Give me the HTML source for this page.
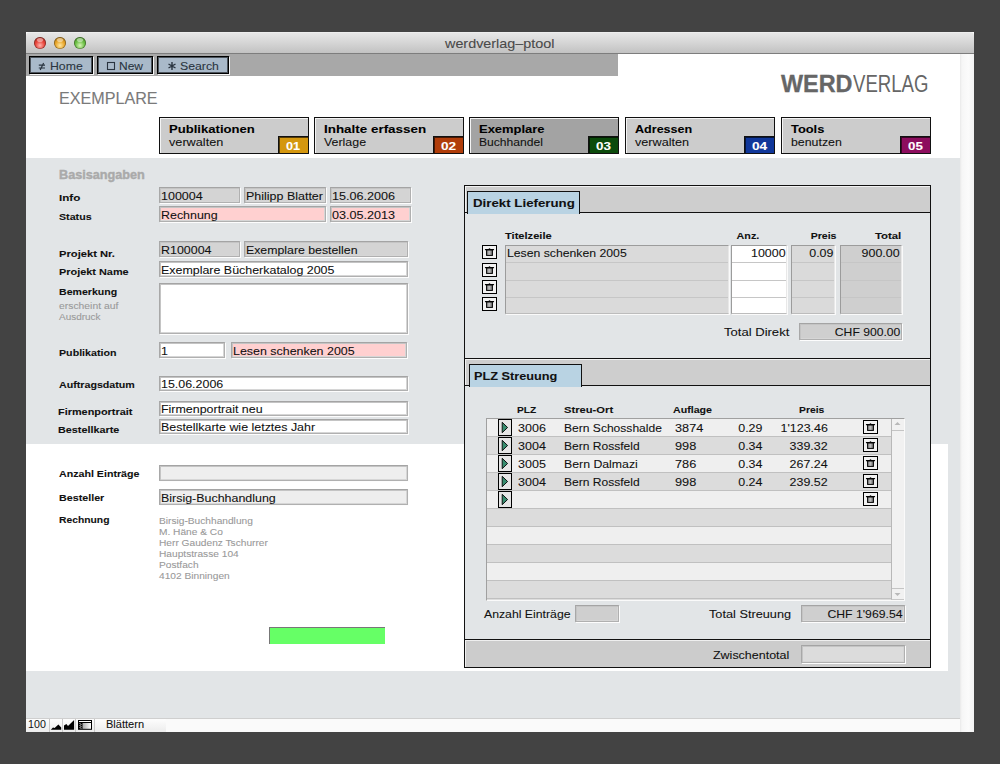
<!DOCTYPE html>
<html><head><meta charset="utf-8"><style>
html,body{margin:0;padding:0;}
body{width:1000px;height:764px;overflow:hidden;position:relative;background:#434343;font-family:"Liberation Sans",sans-serif;}
body>div,body>svg{position:absolute;}
.t{white-space:nowrap;line-height:1;-webkit-text-stroke:0.08px currentColor;}
</style></head><body>
<div style="left:26px;top:32px;width:948px;height:700px;background:#fafafa;"></div>
<div style="left:26px;top:32px;width:948px;height:21px;background:linear-gradient(#f4f4f4 0,#e6e6e6 1px,#d6d6d6 50%,#c2c2c2);border-radius:4px 4px 0 0;"></div>
<div style="left:26px;top:53px;width:948px;height:1px;background:#7d7d7d;"></div>
<div style="left:34px;top:37px;width:12px;height:12px;border-radius:50%;background:radial-gradient(circle at 50% 70%,#ffb3ad 0,#e8443a 45%,#8c2a22 100%);box-shadow:inset 0 0 0 0.8px rgba(0,0,0,0.35);"></div>
<div style="left:37px;top:38px;width:6px;height:3.5px;border-radius:50%;background:rgba(255,255,255,0.45);"></div>
<div style="left:54px;top:37px;width:12px;height:12px;border-radius:50%;background:radial-gradient(circle at 50% 70%,#ffe7a0 0,#e9a52a 45%,#8f6414 100%);box-shadow:inset 0 0 0 0.8px rgba(0,0,0,0.35);"></div>
<div style="left:57px;top:38px;width:6px;height:3.5px;border-radius:50%;background:rgba(255,255,255,0.45);"></div>
<div style="left:74px;top:37px;width:12px;height:12px;border-radius:50%;background:radial-gradient(circle at 50% 70%,#d8f5b8 0,#6cbf45 45%,#3f7a24 100%);box-shadow:inset 0 0 0 0.8px rgba(0,0,0,0.35);"></div>
<div style="left:77px;top:38px;width:6px;height:3.5px;border-radius:50%;background:rgba(255,255,255,0.45);"></div>
<div id="t0" class="t" style="left:444.85px;top:37.00px;font-size:13px;font-weight:normal;color:#4a4a4a;transform:scaleX(1.1052);transform-origin:left 0;font-family:'Liberation Sans', sans-serif;-webkit-text-stroke:0.1px #4a4a4a;">werdverlag–ptool</div>
<div style="left:26px;top:54px;width:934px;height:664px;background:#ffffff;"></div>
<div style="left:960px;top:54px;width:14px;height:678px;background:linear-gradient(90deg,#e9e9e9 0,#f6f6f6 2px,#fbfbfb 60%,#f3f3f3 100%);"></div>
<div style="left:26px;top:54px;width:592px;height:22px;background:#a8a8a8;"></div>
<div style="left:28.8px;top:56px;width:64.2px;height:18px;background:#a9b9c9;border:1px solid #000;box-sizing:border-box;box-shadow:inset 0 0 0 1px rgba(0,0,0,0.55),1px 1px 0 #f4f4f4;"></div>
<div id="t1" class="t" style="left:50.02px;top:61.00px;font-size:11px;font-weight:normal;color:#2a3440;transform:scaleX(1.1153);transform-origin:left 0;font-family:'Liberation Sans', sans-serif;">Home</div>
<div style="left:96.5px;top:56px;width:56.5px;height:18px;background:#a9b9c9;border:1px solid #000;box-sizing:border-box;box-shadow:inset 0 0 0 1px rgba(0,0,0,0.55),1px 1px 0 #f4f4f4;"></div>
<div id="t2" class="t" style="left:119.04px;top:61.00px;font-size:11px;font-weight:normal;color:#2a3440;transform:scaleX(1.0901);transform-origin:left 0;font-family:'Liberation Sans', sans-serif;">New</div>
<div style="left:156.5px;top:56px;width:72.5px;height:18px;background:#a9b9c9;border:1px solid #000;box-sizing:border-box;box-shadow:inset 0 0 0 1px rgba(0,0,0,0.55),1px 1px 0 #f4f4f4;"></div>
<div id="t3" class="t" style="left:179.52px;top:61.00px;font-size:11px;font-weight:normal;color:#2a3440;transform:scaleX(1.1167);transform-origin:left 0;font-family:'Liberation Sans', sans-serif;">Search</div>
<svg style="left:28px;top:56px;" width="200" height="18" viewBox="0 0 200 18"><path d="M10.8 9.2 H17 M10.8 12 H17 M15.6 7 L12.2 14" stroke="#2a3440" stroke-width="1.2" fill="none"/><rect x="79.5" y="6.5" width="7" height="7" fill="none" stroke="#2a3440" stroke-width="1.1"/><path d="M144 6 V14 M140.5 8 L147.5 12 M140.5 12 L147.5 8" stroke="#2a3440" stroke-width="1.4"/></svg>
<div id="t4" class="t" style="left:58.71px;top:91.00px;font-size:16px;font-weight:normal;color:#7a7a7a;transform:scaleX(1.0082);transform-origin:left 0;font-family:'Liberation Sans', sans-serif;-webkit-text-stroke:0.1px #7a7a7a;">EXEMPLARE</div>
<div id="t5" class="t" style="left:780.63px;top:73.00px;font-size:23px;font-weight:bold;color:#666;transform:scaleX(1.0179);transform-origin:left 0;font-family:'Liberation Sans', sans-serif;-webkit-text-stroke:0.3px #666;">WERD</div>
<div id="t6" class="t" style="left:852.91px;top:73.00px;font-size:23px;font-weight:normal;color:#666;transform:scaleX(0.8085);transform-origin:left 0;font-family:'Liberation Sans', sans-serif;-webkit-text-stroke:0px;">VERLAG</div>
<div style="left:159px;top:117px;width:150px;height:37px;background:#cccccc;border:1px solid #111;box-sizing:border-box;box-shadow:inset 1px 1px 0 #f4f4f4;"></div>
<div style="left:278px;top:135.5px;width:31px;height:18.5px;background:#d4970f;border:1px solid #111;box-sizing:border-box;box-shadow:inset 1px 1px 0 rgba(0,0,0,0.6);"></div>
<div id="t7" class="t" style="left:168.95px;top:124.00px;font-size:11px;font-weight:bold;color:#000;transform:scaleX(1.1897);transform-origin:left 0;font-family:'Liberation Sans', sans-serif;">Publikationen</div>
<div id="t8" class="t" style="left:168.99px;top:137.00px;font-size:11px;font-weight:normal;color:#111;transform:scaleX(1.1527);transform-origin:left 0;font-family:'Liberation Sans', sans-serif;">verwalten</div>
<div id="t9" class="t" style="left:285.98px;top:141.00px;font-size:10.5px;font-weight:bold;color:#fff;transform:scaleX(1.2127);transform-origin:left 0;font-family:'Liberation Sans', sans-serif;">01</div>
<div style="left:314px;top:117px;width:150px;height:37px;background:#cccccc;border:1px solid #111;box-sizing:border-box;box-shadow:inset 1px 1px 0 #f4f4f4;"></div>
<div style="left:433px;top:135.5px;width:31px;height:18.5px;background:#b03d0a;border:1px solid #111;box-sizing:border-box;box-shadow:inset 1px 1px 0 rgba(0,0,0,0.6);"></div>
<div id="t10" class="t" style="left:323.93px;top:124.00px;font-size:11px;font-weight:bold;color:#000;transform:scaleX(1.2194);transform-origin:left 0;font-family:'Liberation Sans', sans-serif;">Inhalte erfassen</div>
<div id="t11" class="t" style="left:324.01px;top:137.00px;font-size:11px;font-weight:normal;color:#111;transform:scaleX(1.1267);transform-origin:left 0;font-family:'Liberation Sans', sans-serif;">Verlage</div>
<div id="t12" class="t" style="left:440.91px;top:141.00px;font-size:10.5px;font-weight:bold;color:#fff;transform:scaleX(1.2973);transform-origin:left 0;font-family:'Liberation Sans', sans-serif;">02</div>
<div style="left:469px;top:117px;width:150px;height:37px;background:#a3a3a3;border:1px solid #111;box-sizing:border-box;box-shadow:inset 1px 1px 0 #f4f4f4;"></div>
<div style="left:588px;top:135.5px;width:31px;height:18.5px;background:#0b4a0b;border:1px solid #111;box-sizing:border-box;box-shadow:inset 1px 1px 0 rgba(0,0,0,0.6);"></div>
<div id="t13" class="t" style="left:478.96px;top:124.00px;font-size:11px;font-weight:bold;color:#000;transform:scaleX(1.1786);transform-origin:left 0;font-family:'Liberation Sans', sans-serif;">Exemplare</div>
<div id="t14" class="t" style="left:479.03px;top:137.00px;font-size:11px;font-weight:normal;color:#111;transform:scaleX(1.0998);transform-origin:left 0;font-family:'Liberation Sans', sans-serif;">Buchhandel</div>
<div id="t15" class="t" style="left:595.93px;top:141.00px;font-size:10.5px;font-weight:bold;color:#fff;transform:scaleX(1.2785);transform-origin:left 0;font-family:'Liberation Sans', sans-serif;">03</div>
<div style="left:625px;top:117px;width:150px;height:37px;background:#cccccc;border:1px solid #111;box-sizing:border-box;box-shadow:inset 1px 1px 0 #f4f4f4;"></div>
<div style="left:744px;top:135.5px;width:31px;height:18.5px;background:#10379a;border:1px solid #111;box-sizing:border-box;box-shadow:inset 1px 1px 0 rgba(0,0,0,0.6);"></div>
<div id="t16" class="t" style="left:635.00px;top:124.00px;font-size:11px;font-weight:bold;color:#000;transform:scaleX(1.1419);transform-origin:left 0;font-family:'Liberation Sans', sans-serif;">Adressen</div>
<div id="t17" class="t" style="left:634.99px;top:137.00px;font-size:11px;font-weight:normal;color:#111;transform:scaleX(1.1484);transform-origin:left 0;font-family:'Liberation Sans', sans-serif;">verwalten</div>
<div id="t18" class="t" style="left:751.91px;top:141.00px;font-size:10.5px;font-weight:bold;color:#fff;transform:scaleX(1.2973);transform-origin:left 0;font-family:'Liberation Sans', sans-serif;">04</div>
<div style="left:781px;top:117px;width:150px;height:37px;background:#cccccc;border:1px solid #111;box-sizing:border-box;box-shadow:inset 1px 1px 0 #f4f4f4;"></div>
<div style="left:900px;top:135.5px;width:31px;height:18.5px;background:#8c0d5e;border:1px solid #111;box-sizing:border-box;box-shadow:inset 1px 1px 0 rgba(0,0,0,0.6);"></div>
<div id="t19" class="t" style="left:790.97px;top:124.00px;font-size:11px;font-weight:bold;color:#000;transform:scaleX(1.1672);transform-origin:left 0;font-family:'Liberation Sans', sans-serif;">Tools</div>
<div id="t20" class="t" style="left:791.01px;top:137.00px;font-size:11px;font-weight:normal;color:#111;transform:scaleX(1.1230);transform-origin:left 0;font-family:'Liberation Sans', sans-serif;">benutzen</div>
<div id="t21" class="t" style="left:907.93px;top:141.00px;font-size:10.5px;font-weight:bold;color:#fff;transform:scaleX(1.2691);transform-origin:left 0;font-family:'Liberation Sans', sans-serif;">05</div>
<div style="left:26px;top:158px;width:934px;height:286px;background:#e2e5e7;"></div>
<div style="left:948px;top:444px;width:12px;height:227px;background:#e2e5e7;"></div>
<div style="left:26px;top:671px;width:934px;height:47px;background:#e2e5e7;"></div>
<div id="t22" class="t" style="left:59.19px;top:169.00px;font-size:12px;font-weight:bold;color:#aaaaaa;transform:scaleX(1.0552);transform-origin:left 0;font-family:'Liberation Sans', sans-serif;-webkit-text-stroke:0.4px #aaa;">Basisangaben</div>
<div id="t23" class="t" style="left:58.97px;top:193.00px;font-size:9.6px;font-weight:bold;color:#111;transform:scaleX(1.2144);transform-origin:left 0;font-family:'Liberation Sans', sans-serif;">Info</div>
<div id="t24" class="t" style="left:58.85px;top:212.00px;font-size:9.6px;font-weight:bold;color:#111;transform:scaleX(1.1104);transform-origin:left 0;font-family:'Liberation Sans', sans-serif;">Status</div>
<div id="t25" class="t" style="left:58.51px;top:249.00px;font-size:9.6px;font-weight:bold;color:#111;transform:scaleX(1.1650);transform-origin:left 0;font-family:'Liberation Sans', sans-serif;">Projekt Nr.</div>
<div id="t26" class="t" style="left:58.53px;top:267.00px;font-size:9.6px;font-weight:bold;color:#111;transform:scaleX(1.1364);transform-origin:left 0;font-family:'Liberation Sans', sans-serif;">Projekt Name</div>
<div id="t27" class="t" style="left:58.55px;top:287.00px;font-size:9.6px;font-weight:bold;color:#111;transform:scaleX(1.1019);transform-origin:left 0;font-family:'Liberation Sans', sans-serif;">Bemerkung</div>
<div id="t28" class="t" style="left:58.55px;top:348.00px;font-size:9.6px;font-weight:bold;color:#111;transform:scaleX(1.1115);transform-origin:left 0;font-family:'Liberation Sans', sans-serif;">Publikation</div>
<div id="t29" class="t" style="left:58.55px;top:380.00px;font-size:9.6px;font-weight:bold;color:#111;transform:scaleX(1.1119);transform-origin:left 0;font-family:'Liberation Sans', sans-serif;">Auftragsdatum</div>
<div id="t30" class="t" style="left:57.63px;top:407.00px;font-size:9.6px;font-weight:bold;color:#111;transform:scaleX(1.1344);transform-origin:left 0;font-family:'Liberation Sans', sans-serif;">Firmenportrait</div>
<div id="t31" class="t" style="left:57.63px;top:425.00px;font-size:9.6px;font-weight:bold;color:#111;transform:scaleX(1.1264);transform-origin:left 0;font-family:'Liberation Sans', sans-serif;">Bestellkarte</div>
<div id="t32" class="t" style="left:58.55px;top:469.00px;font-size:9.6px;font-weight:bold;color:#111;transform:scaleX(1.1099);transform-origin:left 0;font-family:'Liberation Sans', sans-serif;">Anzahl Einträge</div>
<div id="t33" class="t" style="left:58.54px;top:493.00px;font-size:9.6px;font-weight:bold;color:#111;transform:scaleX(1.1170);transform-origin:left 0;font-family:'Liberation Sans', sans-serif;">Besteller</div>
<div id="t34" class="t" style="left:58.57px;top:515.00px;font-size:9.6px;font-weight:bold;color:#111;transform:scaleX(1.0752);transform-origin:left 0;font-family:'Liberation Sans', sans-serif;">Rechnung</div>
<div id="t35" class="t" style="left:58.57px;top:302.00px;font-size:9px;font-weight:normal;color:#999;transform:scaleX(1.1515);transform-origin:left 0;font-family:'Liberation Sans', sans-serif;">erscheint auf</div>
<div id="t36" class="t" style="left:58.60px;top:313.00px;font-size:9px;font-weight:normal;color:#999;transform:scaleX(1.1083);transform-origin:left 0;font-family:'Liberation Sans', sans-serif;">Ausdruck</div>
<div style="left:159px;top:187px;width:81px;height:16px;background:#d4d4d4;border:1px solid #b0b0b0;border-top-color:#a4a4a4;border-left-color:#a8a8a8;box-sizing:border-box;box-shadow:1px 1px 0 #fdfdfd,inset 1px 1px 0 #c4c4c4,inset -1px -1px 0 #d6d6d6;"></div>
<div id="t37" class="t" style="left:161.10px;top:191.00px;font-size:11px;font-weight:normal;color:#111;transform:scaleX(1.1370);transform-origin:left 0;font-family:'Liberation Sans', sans-serif;">100004</div>
<div style="left:244px;top:187px;width:82px;height:16px;background:#d4d4d4;border:1px solid #b0b0b0;border-top-color:#a4a4a4;border-left-color:#a8a8a8;box-sizing:border-box;box-shadow:1px 1px 0 #fdfdfd,inset 1px 1px 0 #c4c4c4,inset -1px -1px 0 #d6d6d6;"></div>
<div id="t38" class="t" style="left:246.10px;top:191.00px;font-size:11px;font-weight:normal;color:#111;transform:scaleX(1.1337);transform-origin:left 0;font-family:'Liberation Sans', sans-serif;">Philipp Blatter</div>
<div style="left:330px;top:187px;width:81px;height:16px;background:#d4d4d4;border:1px solid #b0b0b0;border-top-color:#a4a4a4;border-left-color:#a8a8a8;box-sizing:border-box;box-shadow:1px 1px 0 #fdfdfd,inset 1px 1px 0 #c4c4c4,inset -1px -1px 0 #d6d6d6;"></div>
<div id="t39" class="t" style="left:332.09px;top:191.00px;font-size:11px;font-weight:normal;color:#111;transform:scaleX(1.1452);transform-origin:left 0;font-family:'Liberation Sans', sans-serif;">15.06.2006</div>
<div style="left:159px;top:206px;width:167px;height:16px;background:#ffd0d0;border:1px solid #b0b0b0;border-top-color:#a4a4a4;border-left-color:#a8a8a8;box-sizing:border-box;box-shadow:1px 1px 0 #fdfdfd,inset 1px 1px 0 #c4c4c4,inset -1px -1px 0 #d6d6d6;"></div>
<div id="t40" class="t" style="left:161.11px;top:210.00px;font-size:11px;font-weight:normal;color:#111;transform:scaleX(1.1300);transform-origin:left 0;font-family:'Liberation Sans', sans-serif;">Rechnung</div>
<div style="left:330px;top:206px;width:81px;height:16px;background:#ffd0d0;border:1px solid #b0b0b0;border-top-color:#a4a4a4;border-left-color:#a8a8a8;box-sizing:border-box;box-shadow:1px 1px 0 #fdfdfd,inset 1px 1px 0 #c4c4c4,inset -1px -1px 0 #d6d6d6;"></div>
<div id="t41" class="t" style="left:332.09px;top:210.00px;font-size:11px;font-weight:normal;color:#111;transform:scaleX(1.1452);transform-origin:left 0;font-family:'Liberation Sans', sans-serif;">03.05.2013</div>
<div style="left:159px;top:241px;width:81px;height:16px;background:#d4d4d4;border:1px solid #b0b0b0;border-top-color:#a4a4a4;border-left-color:#a8a8a8;box-sizing:border-box;box-shadow:1px 1px 0 #fdfdfd,inset 1px 1px 0 #c4c4c4,inset -1px -1px 0 #d6d6d6;"></div>
<div id="t42" class="t" style="left:161.11px;top:245.00px;font-size:11px;font-weight:normal;color:#111;transform:scaleX(1.1300);transform-origin:left 0;font-family:'Liberation Sans', sans-serif;">R100004</div>
<div style="left:244px;top:241px;width:164px;height:16px;background:#d4d4d4;border:1px solid #b0b0b0;border-top-color:#a4a4a4;border-left-color:#a8a8a8;box-sizing:border-box;box-shadow:1px 1px 0 #fdfdfd,inset 1px 1px 0 #c4c4c4,inset -1px -1px 0 #d6d6d6;"></div>
<div id="t43" class="t" style="left:246.12px;top:245.00px;font-size:11px;font-weight:normal;color:#111;transform:scaleX(1.1190);transform-origin:left 0;font-family:'Liberation Sans', sans-serif;">Exemplare bestellen</div>
<div style="left:159px;top:261px;width:249px;height:16px;background:#ffffff;border:1px solid #b0b0b0;border-top-color:#a4a4a4;border-left-color:#a8a8a8;box-sizing:border-box;box-shadow:1px 1px 0 #fdfdfd,inset 1px 1px 0 #c4c4c4,inset -1px -1px 0 #d6d6d6;"></div>
<div id="t44" class="t" style="left:161.11px;top:265.00px;font-size:11px;font-weight:normal;color:#111;transform:scaleX(1.1300);transform-origin:left 0;font-family:'Liberation Sans', sans-serif;">Exemplare Bücherkatalog 2005</div>
<div style="left:159px;top:282.5px;width:249px;height:51.0px;background:#ffffff;border:1px solid #b0b0b0;border-top-color:#a4a4a4;border-left-color:#a8a8a8;box-sizing:border-box;box-shadow:1px 1px 0 #fdfdfd,inset 1px 1px 0 #c4c4c4,inset -1px -1px 0 #d6d6d6;"></div>
<div style="left:159px;top:342px;width:66px;height:16px;background:#ffffff;border:1px solid #b0b0b0;border-top-color:#a4a4a4;border-left-color:#a8a8a8;box-sizing:border-box;box-shadow:1px 1px 0 #fdfdfd,inset 1px 1px 0 #c4c4c4,inset -1px -1px 0 #d6d6d6;"></div>
<div id="t45" class="t" style="left:161.11px;top:346.00px;font-size:11px;font-weight:normal;color:#111;transform:scaleX(1.1300);transform-origin:left 0;font-family:'Liberation Sans', sans-serif;">1</div>
<div style="left:231px;top:342px;width:176px;height:16px;background:#ffd0d0;border:1px solid #b0b0b0;border-top-color:#a4a4a4;border-left-color:#a8a8a8;box-sizing:border-box;box-shadow:1px 1px 0 #fdfdfd,inset 1px 1px 0 #c4c4c4,inset -1px -1px 0 #d6d6d6;"></div>
<div id="t46" class="t" style="left:233.11px;top:346.00px;font-size:11px;font-weight:normal;color:#111;transform:scaleX(1.1300);transform-origin:left 0;font-family:'Liberation Sans', sans-serif;">Lesen schenken 2005</div>
<div style="left:159px;top:375.5px;width:249px;height:15.5px;background:#ffffff;border:1px solid #b0b0b0;border-top-color:#a4a4a4;border-left-color:#a8a8a8;box-sizing:border-box;box-shadow:1px 1px 0 #fdfdfd,inset 1px 1px 0 #c4c4c4,inset -1px -1px 0 #d6d6d6;"></div>
<div id="t47" class="t" style="left:161.11px;top:379.00px;font-size:11px;font-weight:normal;color:#111;transform:scaleX(1.1300);transform-origin:left 0;font-family:'Liberation Sans', sans-serif;">15.06.2006</div>
<div style="left:159px;top:400.5px;width:249px;height:15.0px;background:#ffffff;border:1px solid #b0b0b0;border-top-color:#a4a4a4;border-left-color:#a8a8a8;box-sizing:border-box;box-shadow:1px 1px 0 #fdfdfd,inset 1px 1px 0 #c4c4c4,inset -1px -1px 0 #d6d6d6;"></div>
<div id="t48" class="t" style="left:161.11px;top:404.00px;font-size:11px;font-weight:normal;color:#111;transform:scaleX(1.1300);transform-origin:left 0;font-family:'Liberation Sans', sans-serif;">Firmenportrait neu</div>
<div style="left:159px;top:419px;width:249px;height:15px;background:#ffffff;border:1px solid #b0b0b0;border-top-color:#a4a4a4;border-left-color:#a8a8a8;box-sizing:border-box;box-shadow:1px 1px 0 #fdfdfd,inset 1px 1px 0 #c4c4c4,inset -1px -1px 0 #d6d6d6;"></div>
<div id="t49" class="t" style="left:161.11px;top:422.00px;font-size:11px;font-weight:normal;color:#111;transform:scaleX(1.1300);transform-origin:left 0;font-family:'Liberation Sans', sans-serif;">Bestellkarte wie letztes Jahr</div>
<div style="left:159px;top:465px;width:249px;height:16px;background:#eeeeee;border:1px solid #b0b0b0;border-top-color:#a4a4a4;border-left-color:#a8a8a8;box-sizing:border-box;box-shadow:1px 1px 0 #fdfdfd,inset 1px 1px 0 #c4c4c4,inset -1px -1px 0 #d6d6d6;"></div>
<div style="left:159px;top:489px;width:249px;height:16px;background:#eeeeee;border:1px solid #b0b0b0;border-top-color:#a4a4a4;border-left-color:#a8a8a8;box-sizing:border-box;box-shadow:1px 1px 0 #fdfdfd,inset 1px 1px 0 #c4c4c4,inset -1px -1px 0 #d6d6d6;"></div>
<div id="t50" class="t" style="left:161.11px;top:493.00px;font-size:11px;font-weight:normal;color:#111;transform:scaleX(1.1300);transform-origin:left 0;font-family:'Liberation Sans', sans-serif;">Birsig-Buchhandlung</div>
<div id="t51" class="t" style="left:159.19px;top:517.00px;font-size:9px;font-weight:normal;color:#999;transform:scaleX(1.1300);transform-origin:left 0;font-family:'Liberation Sans', sans-serif;">Birsig-Buchhandlung</div>
<div id="t52" class="t" style="left:159.19px;top:528.00px;font-size:9px;font-weight:normal;color:#999;transform:scaleX(1.1300);transform-origin:left 0;font-family:'Liberation Sans', sans-serif;">M. Häne &amp; Co</div>
<div id="t53" class="t" style="left:159.19px;top:539.00px;font-size:9px;font-weight:normal;color:#999;transform:scaleX(1.1300);transform-origin:left 0;font-family:'Liberation Sans', sans-serif;">Herr Gaudenz Tschurrer</div>
<div id="t54" class="t" style="left:159.19px;top:550.00px;font-size:9px;font-weight:normal;color:#999;transform:scaleX(1.1300);transform-origin:left 0;font-family:'Liberation Sans', sans-serif;">Hauptstrasse 104</div>
<div id="t55" class="t" style="left:159.19px;top:561.00px;font-size:9px;font-weight:normal;color:#999;transform:scaleX(1.1300);transform-origin:left 0;font-family:'Liberation Sans', sans-serif;">Postfach</div>
<div id="t56" class="t" style="left:159.19px;top:572.00px;font-size:9px;font-weight:normal;color:#999;transform:scaleX(1.1300);transform-origin:left 0;font-family:'Liberation Sans', sans-serif;">4102 Binningen</div>
<div style="left:269px;top:627px;width:116px;height:17px;background:#66ff66;border-top:1px solid #777;border-left:1px solid #777;box-sizing:border-box;"></div>
<div style="left:464px;top:185px;width:467px;height:174px;background:#e2e5e7;border:1px solid #111;border-bottom:none;box-sizing:border-box;"></div>
<div style="left:465px;top:186px;width:465px;height:26px;background:#cecece;box-shadow:inset 1px 1px 0 #f2f2f2;"></div>
<div style="left:464px;top:212px;width:467px;height:1px;background:#111;"></div>
<div style="left:467px;top:191px;width:113px;height:22.5px;background:#b9d3e3;border:1px solid #111;border-bottom:none;box-sizing:border-box;"></div>
<div id="t57" class="t" style="left:472.84px;top:198.00px;font-size:11px;font-weight:bold;color:#111;transform:scaleX(1.2071);transform-origin:left 0;font-family:'Liberation Sans', sans-serif;">Direkt Lieferung</div>
<div id="t58" class="t" style="left:504.61px;top:231.00px;font-size:9.6px;font-weight:bold;color:#111;transform:scaleX(1.1574);transform-origin:left 0;font-family:'Liberation Sans', sans-serif;">Titelzeile</div>
<div id="t59" class="t" style="right:240.66px;top:231.00px;font-size:9.6px;font-weight:bold;color:#111;transform:scaleX(1.1188);transform-origin:right 0;font-family:'Liberation Sans', sans-serif;">Anz.</div>
<div id="t60" class="t" style="right:163.27px;top:231.00px;font-size:9.6px;font-weight:bold;color:#111;transform:scaleX(1.1010);transform-origin:right 0;font-family:'Liberation Sans', sans-serif;">Preis</div>
<div id="t61" class="t" style="right:98.93px;top:231.00px;font-size:9.6px;font-weight:bold;color:#111;transform:scaleX(1.1854);transform-origin:right 0;font-family:'Liberation Sans', sans-serif;">Total</div>
<div style="left:505px;top:244.5px;width:223.5px;height:69.5px;background:#dadada;border:1px solid #bcbcbc;border-top-color:#9c9c9c;border-left-color:#9c9c9c;border-right-color:#e8e8e8;box-sizing:border-box;box-shadow:1px 1px 0 #fafafa;"></div>
<div style="left:506px;top:262.3px;width:221.5px;height:1.0px;background:#c6c6c6;"></div>
<div style="left:506px;top:279.5px;width:221.5px;height:1.0px;background:#c6c6c6;"></div>
<div style="left:506px;top:296.7px;width:221.5px;height:1.0px;background:#c6c6c6;"></div>
<div style="left:730.5px;top:244.5px;width:56.5px;height:69.5px;background:#ffffff;border:1px solid #bcbcbc;border-top-color:#9c9c9c;border-left-color:#9c9c9c;border-right-color:#e8e8e8;box-sizing:border-box;box-shadow:1px 1px 0 #fafafa;"></div>
<div style="left:731.5px;top:262.3px;width:54.5px;height:1.0px;background:#c6c6c6;"></div>
<div style="left:731.5px;top:279.5px;width:54.5px;height:1.0px;background:#c6c6c6;"></div>
<div style="left:731.5px;top:296.7px;width:54.5px;height:1.0px;background:#c6c6c6;"></div>
<div style="left:790.5px;top:244.5px;width:44.0px;height:69.5px;background:#dadada;border:1px solid #bcbcbc;border-top-color:#9c9c9c;border-left-color:#9c9c9c;border-right-color:#e8e8e8;box-sizing:border-box;box-shadow:1px 1px 0 #fafafa;"></div>
<div style="left:791.5px;top:262.3px;width:42.0px;height:1.0px;background:#c6c6c6;"></div>
<div style="left:791.5px;top:279.5px;width:42.0px;height:1.0px;background:#c6c6c6;"></div>
<div style="left:791.5px;top:296.7px;width:42.0px;height:1.0px;background:#c6c6c6;"></div>
<div style="left:839.5px;top:244.5px;width:62.0px;height:69.5px;background:#cfcfcf;border:1px solid #bcbcbc;border-top-color:#9c9c9c;border-left-color:#9c9c9c;border-right-color:#e8e8e8;box-sizing:border-box;box-shadow:1px 1px 0 #fafafa;"></div>
<div style="left:840.5px;top:262.3px;width:60.0px;height:1.0px;background:#c6c6c6;"></div>
<div style="left:840.5px;top:279.5px;width:60.0px;height:1.0px;background:#c6c6c6;"></div>
<div style="left:840.5px;top:296.7px;width:60.0px;height:1.0px;background:#c6c6c6;"></div>
<div id="t62" class="t" style="left:507.02px;top:248.00px;font-size:11px;font-weight:normal;color:#111;transform:scaleX(1.1121);transform-origin:left 0;font-family:'Liberation Sans', sans-serif;">Lesen schenken 2005</div>
<div id="t63" class="t" style="right:214.08px;top:248.00px;font-size:11px;font-weight:normal;color:#111;transform:scaleX(1.1300);transform-origin:right 0;font-family:'Liberation Sans', sans-serif;">10000</div>
<div id="t64" class="t" style="right:166.88px;top:248.00px;font-size:11px;font-weight:normal;color:#111;transform:scaleX(1.1300);transform-origin:right 0;font-family:'Liberation Sans', sans-serif;">0.09</div>
<div id="t65" class="t" style="right:99.88px;top:248.00px;font-size:11px;font-weight:normal;color:#111;transform:scaleX(1.1300);transform-origin:right 0;font-family:'Liberation Sans', sans-serif;">900.00</div>
<div style="left:482px;top:245px;width:15px;height:14px;border:1px solid #000;box-sizing:border-box;background:#f2f2f2;"></div>
<svg style="left:482px;top:245px;" width="15" height="14" viewBox="0 0 15 14"><defs><linearGradient id="tg" x1="0" x2="1"><stop offset="0" stop-color="#777"/><stop offset="0.45" stop-color="#c4c4c4"/><stop offset="1" stop-color="#666"/></linearGradient></defs><path d="M3.4 4.6 H11.6" stroke="#000" stroke-width="1.1" stroke-linecap="round"/><path d="M6.4 4.3 Q7.5 2.4 8.6 4.3Z" fill="#000"/><rect x="4.6" y="5" width="5.8" height="5.4" fill="url(#tg)" stroke="#000" stroke-width="1"/></svg>
<div style="left:482px;top:262.5px;width:15px;height:14px;border:1px solid #000;box-sizing:border-box;background:#f2f2f2;"></div>
<svg style="left:482px;top:262.5px;" width="15" height="14" viewBox="0 0 15 14"><defs><linearGradient id="tg" x1="0" x2="1"><stop offset="0" stop-color="#777"/><stop offset="0.45" stop-color="#c4c4c4"/><stop offset="1" stop-color="#666"/></linearGradient></defs><path d="M3.4 4.6 H11.6" stroke="#000" stroke-width="1.1" stroke-linecap="round"/><path d="M6.4 4.3 Q7.5 2.4 8.6 4.3Z" fill="#000"/><rect x="4.6" y="5" width="5.8" height="5.4" fill="url(#tg)" stroke="#000" stroke-width="1"/></svg>
<div style="left:482px;top:280px;width:15px;height:14px;border:1px solid #000;box-sizing:border-box;background:#f2f2f2;"></div>
<svg style="left:482px;top:280px;" width="15" height="14" viewBox="0 0 15 14"><defs><linearGradient id="tg" x1="0" x2="1"><stop offset="0" stop-color="#777"/><stop offset="0.45" stop-color="#c4c4c4"/><stop offset="1" stop-color="#666"/></linearGradient></defs><path d="M3.4 4.6 H11.6" stroke="#000" stroke-width="1.1" stroke-linecap="round"/><path d="M6.4 4.3 Q7.5 2.4 8.6 4.3Z" fill="#000"/><rect x="4.6" y="5" width="5.8" height="5.4" fill="url(#tg)" stroke="#000" stroke-width="1"/></svg>
<div style="left:482px;top:297px;width:15px;height:14px;border:1px solid #000;box-sizing:border-box;background:#f2f2f2;"></div>
<svg style="left:482px;top:297px;" width="15" height="14" viewBox="0 0 15 14"><defs><linearGradient id="tg" x1="0" x2="1"><stop offset="0" stop-color="#777"/><stop offset="0.45" stop-color="#c4c4c4"/><stop offset="1" stop-color="#666"/></linearGradient></defs><path d="M3.4 4.6 H11.6" stroke="#000" stroke-width="1.1" stroke-linecap="round"/><path d="M6.4 4.3 Q7.5 2.4 8.6 4.3Z" fill="#000"/><rect x="4.6" y="5" width="5.8" height="5.4" fill="url(#tg)" stroke="#000" stroke-width="1"/></svg>
<div id="t66" class="t" style="left:724.46px;top:327.00px;font-size:11px;font-weight:normal;color:#111;transform:scaleX(1.1867);transform-origin:left 0;font-family:'Liberation Sans', sans-serif;">Total Direkt</div>
<div style="left:799px;top:323px;width:103px;height:16.5px;background:#cfcfcf;border:1px solid #b0b0b0;border-top-color:#a4a4a4;border-left-color:#a8a8a8;box-sizing:border-box;box-shadow:1px 1px 0 #fdfdfd,inset 1px 1px 0 #c4c4c4,inset -1px -1px 0 #d6d6d6;"></div>
<div id="t67" class="t" style="right:99.89px;top:327.00px;font-size:11px;font-weight:normal;color:#111;transform:scaleX(1.1037);transform-origin:right 0;font-family:'Liberation Sans', sans-serif;">CHF 900.00</div>
<div style="left:464px;top:358px;width:467px;height:281.5px;background:#e2e5e7;border:1px solid #111;border-bottom:none;box-sizing:border-box;"></div>
<div style="left:465px;top:359px;width:465px;height:26px;background:#cecece;box-shadow:inset 1px 1px 0 #f2f2f2;"></div>
<div style="left:464px;top:385px;width:467px;height:1px;background:#111;"></div>
<div style="left:469px;top:364px;width:113px;height:22.5px;background:#b9d3e3;border:1px solid #111;border-bottom:none;box-sizing:border-box;"></div>
<div id="t68" class="t" style="left:474.48px;top:371.00px;font-size:11px;font-weight:bold;color:#111;transform:scaleX(1.1548);transform-origin:left 0;font-family:'Liberation Sans', sans-serif;">PLZ Streuung</div>
<div id="t69" class="t" style="left:516.69px;top:405.00px;font-size:9.6px;font-weight:bold;color:#111;transform:scaleX(1.0603);transform-origin:left 0;font-family:'Liberation Sans', sans-serif;">PLZ</div>
<div id="t70" class="t" style="left:564.10px;top:405.00px;font-size:9.6px;font-weight:bold;color:#111;transform:scaleX(1.1665);transform-origin:left 0;font-family:'Liberation Sans', sans-serif;">Streu-Ort</div>
<div id="t71" class="t" style="left:672.65px;top:405.00px;font-size:9.6px;font-weight:bold;color:#111;transform:scaleX(1.1073);transform-origin:left 0;font-family:'Liberation Sans', sans-serif;">Auflage</div>
<div id="t72" class="t" style="left:799.17px;top:405.00px;font-size:9.6px;font-weight:bold;color:#111;transform:scaleX(1.0766);transform-origin:left 0;font-family:'Liberation Sans', sans-serif;">Preis</div>
<div style="left:486px;top:418px;width:419px;height:183px;background:#dddddd;border-top:1px solid #a0a0a0;border-left:1px solid #a0a0a0;border-bottom:1px solid #fafafa;border-right:1px solid #fafafa;box-sizing:border-box;"></div>
<div style="left:487px;top:419px;width:404px;height:18px;background:#efefef;border-bottom:1px solid #c0c0c0;box-sizing:border-box;"></div>
<div style="left:487px;top:437px;width:404px;height:18px;background:#dcdcdc;border-bottom:1px solid #c0c0c0;box-sizing:border-box;"></div>
<div style="left:487px;top:455px;width:404px;height:18px;background:#efefef;border-bottom:1px solid #c0c0c0;box-sizing:border-box;"></div>
<div style="left:487px;top:473px;width:404px;height:18px;background:#dcdcdc;border-bottom:1px solid #c0c0c0;box-sizing:border-box;"></div>
<div style="left:487px;top:491px;width:404px;height:18px;background:#efefef;border-bottom:1px solid #c0c0c0;box-sizing:border-box;"></div>
<div style="left:487px;top:509px;width:404px;height:18px;background:#dcdcdc;border-bottom:1px solid #c0c0c0;box-sizing:border-box;"></div>
<div style="left:487px;top:527px;width:404px;height:18px;background:#efefef;border-bottom:1px solid #c0c0c0;box-sizing:border-box;"></div>
<div style="left:487px;top:545px;width:404px;height:18px;background:#dcdcdc;border-bottom:1px solid #c0c0c0;box-sizing:border-box;"></div>
<div style="left:487px;top:563px;width:404px;height:18px;background:#efefef;border-bottom:1px solid #c0c0c0;box-sizing:border-box;"></div>
<div style="left:487px;top:581px;width:404px;height:18px;background:#dcdcdc;border-bottom:1px solid #c0c0c0;box-sizing:border-box;"></div>
<div style="left:891px;top:419px;width:13px;height:181px;background:#f1f1f1;border-left:1px solid #b8b8b8;border-bottom:1px solid #c8c8c8;box-sizing:border-box;"></div>
<svg style="left:891px;top:418px;" width="13" height="182" viewBox="0 0 13 182"><path d="M3.5 7 L6.5 4 L9.5 7Z" fill="#b8b8b8"/><path d="M1 12.5 H13" stroke="#c4c4c4"/><path d="M1 170.5 H13" stroke="#c4c4c4"/><path d="M3.5 175 L6.5 178 L9.5 175Z" fill="#b8b8b8"/></svg>
<div style="left:498px;top:419px;width:14px;height:17px;border:1px solid #000;box-sizing:border-box;background:#e6e6e6;"></div>
<svg style="left:498px;top:419px;" width="14" height="17" viewBox="0 0 14 17"><path d="M4.2 3.3 L9.6 8.5 L4.2 13.7Z" fill="#368c6e" stroke="#000" stroke-width="0.9" stroke-linejoin="miter"/></svg>
<div style="left:863px;top:420px;width:15px;height:14px;border:1px solid #000;box-sizing:border-box;background:#f2f2f2;"></div>
<svg style="left:863px;top:420px;" width="15" height="14" viewBox="0 0 15 14"><defs><linearGradient id="tg" x1="0" x2="1"><stop offset="0" stop-color="#777"/><stop offset="0.45" stop-color="#c4c4c4"/><stop offset="1" stop-color="#666"/></linearGradient></defs><path d="M3.4 4.6 H11.6" stroke="#000" stroke-width="1.1" stroke-linecap="round"/><path d="M6.4 4.3 Q7.5 2.4 8.6 4.3Z" fill="#000"/><rect x="4.6" y="5" width="5.8" height="5.4" fill="url(#tg)" stroke="#000" stroke-width="1"/></svg>
<div style="left:498px;top:437px;width:14px;height:17px;border:1px solid #000;box-sizing:border-box;background:#e6e6e6;"></div>
<svg style="left:498px;top:437px;" width="14" height="17" viewBox="0 0 14 17"><path d="M4.2 3.3 L9.6 8.5 L4.2 13.7Z" fill="#368c6e" stroke="#000" stroke-width="0.9" stroke-linejoin="miter"/></svg>
<div style="left:863px;top:438px;width:15px;height:14px;border:1px solid #000;box-sizing:border-box;background:#f2f2f2;"></div>
<svg style="left:863px;top:438px;" width="15" height="14" viewBox="0 0 15 14"><defs><linearGradient id="tg" x1="0" x2="1"><stop offset="0" stop-color="#777"/><stop offset="0.45" stop-color="#c4c4c4"/><stop offset="1" stop-color="#666"/></linearGradient></defs><path d="M3.4 4.6 H11.6" stroke="#000" stroke-width="1.1" stroke-linecap="round"/><path d="M6.4 4.3 Q7.5 2.4 8.6 4.3Z" fill="#000"/><rect x="4.6" y="5" width="5.8" height="5.4" fill="url(#tg)" stroke="#000" stroke-width="1"/></svg>
<div style="left:498px;top:455px;width:14px;height:17px;border:1px solid #000;box-sizing:border-box;background:#e6e6e6;"></div>
<svg style="left:498px;top:455px;" width="14" height="17" viewBox="0 0 14 17"><path d="M4.2 3.3 L9.6 8.5 L4.2 13.7Z" fill="#368c6e" stroke="#000" stroke-width="0.9" stroke-linejoin="miter"/></svg>
<div style="left:863px;top:456px;width:15px;height:14px;border:1px solid #000;box-sizing:border-box;background:#f2f2f2;"></div>
<svg style="left:863px;top:456px;" width="15" height="14" viewBox="0 0 15 14"><defs><linearGradient id="tg" x1="0" x2="1"><stop offset="0" stop-color="#777"/><stop offset="0.45" stop-color="#c4c4c4"/><stop offset="1" stop-color="#666"/></linearGradient></defs><path d="M3.4 4.6 H11.6" stroke="#000" stroke-width="1.1" stroke-linecap="round"/><path d="M6.4 4.3 Q7.5 2.4 8.6 4.3Z" fill="#000"/><rect x="4.6" y="5" width="5.8" height="5.4" fill="url(#tg)" stroke="#000" stroke-width="1"/></svg>
<div style="left:498px;top:473px;width:14px;height:17px;border:1px solid #000;box-sizing:border-box;background:#e6e6e6;"></div>
<svg style="left:498px;top:473px;" width="14" height="17" viewBox="0 0 14 17"><path d="M4.2 3.3 L9.6 8.5 L4.2 13.7Z" fill="#368c6e" stroke="#000" stroke-width="0.9" stroke-linejoin="miter"/></svg>
<div style="left:863px;top:474px;width:15px;height:14px;border:1px solid #000;box-sizing:border-box;background:#f2f2f2;"></div>
<svg style="left:863px;top:474px;" width="15" height="14" viewBox="0 0 15 14"><defs><linearGradient id="tg" x1="0" x2="1"><stop offset="0" stop-color="#777"/><stop offset="0.45" stop-color="#c4c4c4"/><stop offset="1" stop-color="#666"/></linearGradient></defs><path d="M3.4 4.6 H11.6" stroke="#000" stroke-width="1.1" stroke-linecap="round"/><path d="M6.4 4.3 Q7.5 2.4 8.6 4.3Z" fill="#000"/><rect x="4.6" y="5" width="5.8" height="5.4" fill="url(#tg)" stroke="#000" stroke-width="1"/></svg>
<div style="left:498px;top:491px;width:14px;height:17px;border:1px solid #000;box-sizing:border-box;background:#e6e6e6;"></div>
<svg style="left:498px;top:491px;" width="14" height="17" viewBox="0 0 14 17"><path d="M4.2 3.3 L9.6 8.5 L4.2 13.7Z" fill="#368c6e" stroke="#000" stroke-width="0.9" stroke-linejoin="miter"/></svg>
<div style="left:863px;top:492px;width:15px;height:14px;border:1px solid #000;box-sizing:border-box;background:#f2f2f2;"></div>
<svg style="left:863px;top:492px;" width="15" height="14" viewBox="0 0 15 14"><defs><linearGradient id="tg" x1="0" x2="1"><stop offset="0" stop-color="#777"/><stop offset="0.45" stop-color="#c4c4c4"/><stop offset="1" stop-color="#666"/></linearGradient></defs><path d="M3.4 4.6 H11.6" stroke="#000" stroke-width="1.1" stroke-linecap="round"/><path d="M6.4 4.3 Q7.5 2.4 8.6 4.3Z" fill="#000"/><rect x="4.6" y="5" width="5.8" height="5.4" fill="url(#tg)" stroke="#000" stroke-width="1"/></svg>
<div id="t73" class="t" style="left:517.60px;top:423.00px;font-size:11px;font-weight:normal;color:#111;transform:scaleX(1.1375);transform-origin:left 0;font-family:'Liberation Sans', sans-serif;">3006</div>
<div id="t74" class="t" style="left:563.73px;top:423.00px;font-size:11px;font-weight:normal;color:#111;transform:scaleX(1.0966);transform-origin:left 0;font-family:'Liberation Sans', sans-serif;">Bern Schosshalde</div>
<div id="t75" class="t" style="left:675.28px;top:423.00px;font-size:11px;font-weight:normal;color:#111;transform:scaleX(1.1546);transform-origin:left 0;font-family:'Liberation Sans', sans-serif;">3874</div>
<div id="t76" class="t" style="right:237.78px;top:423.00px;font-size:11px;font-weight:normal;color:#111;transform:scaleX(1.1300);transform-origin:right 0;font-family:'Liberation Sans', sans-serif;">0.29</div>
<div id="t77" class="t" style="right:171.88px;top:423.00px;font-size:11px;font-weight:normal;color:#111;transform:scaleX(1.1300);transform-origin:right 0;font-family:'Liberation Sans', sans-serif;">1'123.46</div>
<div id="t78" class="t" style="left:517.60px;top:441.00px;font-size:11px;font-weight:normal;color:#111;transform:scaleX(1.1375);transform-origin:left 0;font-family:'Liberation Sans', sans-serif;">3004</div>
<div id="t79" class="t" style="left:563.74px;top:441.00px;font-size:11px;font-weight:normal;color:#111;transform:scaleX(1.0957);transform-origin:left 0;font-family:'Liberation Sans', sans-serif;">Bern Rossfeld</div>
<div id="t80" class="t" style="left:675.28px;top:441.00px;font-size:11px;font-weight:normal;color:#111;transform:scaleX(1.1588);transform-origin:left 0;font-family:'Liberation Sans', sans-serif;">998</div>
<div id="t81" class="t" style="right:237.78px;top:441.00px;font-size:11px;font-weight:normal;color:#111;transform:scaleX(1.1300);transform-origin:right 0;font-family:'Liberation Sans', sans-serif;">0.34</div>
<div id="t82" class="t" style="right:171.88px;top:441.00px;font-size:11px;font-weight:normal;color:#111;transform:scaleX(1.1300);transform-origin:right 0;font-family:'Liberation Sans', sans-serif;">339.32</div>
<div id="t83" class="t" style="left:517.60px;top:459.00px;font-size:11px;font-weight:normal;color:#111;transform:scaleX(1.1375);transform-origin:left 0;font-family:'Liberation Sans', sans-serif;">3005</div>
<div id="t84" class="t" style="left:563.72px;top:459.00px;font-size:11px;font-weight:normal;color:#111;transform:scaleX(1.1181);transform-origin:left 0;font-family:'Liberation Sans', sans-serif;">Bern Dalmazi</div>
<div id="t85" class="t" style="left:675.28px;top:459.00px;font-size:11px;font-weight:normal;color:#111;transform:scaleX(1.1588);transform-origin:left 0;font-family:'Liberation Sans', sans-serif;">786</div>
<div id="t86" class="t" style="right:237.78px;top:459.00px;font-size:11px;font-weight:normal;color:#111;transform:scaleX(1.1300);transform-origin:right 0;font-family:'Liberation Sans', sans-serif;">0.34</div>
<div id="t87" class="t" style="right:171.88px;top:459.00px;font-size:11px;font-weight:normal;color:#111;transform:scaleX(1.1300);transform-origin:right 0;font-family:'Liberation Sans', sans-serif;">267.24</div>
<div id="t88" class="t" style="left:517.60px;top:477.00px;font-size:11px;font-weight:normal;color:#111;transform:scaleX(1.1375);transform-origin:left 0;font-family:'Liberation Sans', sans-serif;">3004</div>
<div id="t89" class="t" style="left:563.74px;top:477.00px;font-size:11px;font-weight:normal;color:#111;transform:scaleX(1.0957);transform-origin:left 0;font-family:'Liberation Sans', sans-serif;">Bern Rossfeld</div>
<div id="t90" class="t" style="left:675.28px;top:477.00px;font-size:11px;font-weight:normal;color:#111;transform:scaleX(1.1588);transform-origin:left 0;font-family:'Liberation Sans', sans-serif;">998</div>
<div id="t91" class="t" style="right:237.78px;top:477.00px;font-size:11px;font-weight:normal;color:#111;transform:scaleX(1.1300);transform-origin:right 0;font-family:'Liberation Sans', sans-serif;">0.24</div>
<div id="t92" class="t" style="right:171.88px;top:477.00px;font-size:11px;font-weight:normal;color:#111;transform:scaleX(1.1300);transform-origin:right 0;font-family:'Liberation Sans', sans-serif;">239.52</div>
<div id="t93" class="t" style="left:484.02px;top:609.00px;font-size:11px;font-weight:normal;color:#111;transform:scaleX(1.1140);transform-origin:left 0;font-family:'Liberation Sans', sans-serif;">Anzahl Einträge</div>
<div style="left:575px;top:605px;width:43.5px;height:16.5px;background:#cfcfcf;border:1px solid #b0b0b0;border-top-color:#a4a4a4;border-left-color:#a8a8a8;box-sizing:border-box;box-shadow:1px 1px 0 #fdfdfd,inset 1px 1px 0 #c4c4c4,inset -1px -1px 0 #d6d6d6;"></div>
<div id="t94" class="t" style="left:709.48px;top:609.00px;font-size:11px;font-weight:normal;color:#111;transform:scaleX(1.1563);transform-origin:left 0;font-family:'Liberation Sans', sans-serif;">Total Streuung</div>
<div style="left:801px;top:605px;width:103.5px;height:16.5px;background:#cfcfcf;border:1px solid #b0b0b0;border-top-color:#a4a4a4;border-left-color:#a8a8a8;box-sizing:border-box;box-shadow:1px 1px 0 #fdfdfd,inset 1px 1px 0 #c4c4c4,inset -1px -1px 0 #d6d6d6;"></div>
<div id="t95" class="t" style="right:97.39px;top:609.00px;font-size:11px;font-weight:normal;color:#111;transform:scaleX(1.1117);transform-origin:right 0;font-family:'Liberation Sans', sans-serif;">CHF 1'969.54</div>
<div style="left:464px;top:638.5px;width:467px;height:29.5px;background:#cccccc;border:1px solid #111;box-sizing:border-box;box-shadow:inset 1px 1px 0 #efefef;"></div>
<div id="t96" class="t" style="left:712.75px;top:650.00px;font-size:11px;font-weight:normal;color:#111;transform:scaleX(1.1335);transform-origin:left 0;font-family:'Liberation Sans', sans-serif;">Zwischentotal</div>
<div style="left:801px;top:645px;width:103.5px;height:17.5px;background:#dcdcdc;border:1px solid #b0b0b0;border-top-color:#a4a4a4;border-left-color:#a8a8a8;box-sizing:border-box;box-shadow:1px 1px 0 #fdfdfd,inset 1px 1px 0 #c4c4c4,inset -1px -1px 0 #d6d6d6;"></div>
<div style="left:26px;top:717.5px;width:934px;height:1.0px;background:#cfcfcf;"></div>
<div style="left:26px;top:718.5px;width:140px;height:13.5px;background:linear-gradient(#fdfdfd,#ececec);"></div>
<div id="t97" class="t" style="left:27.94px;top:719.00px;font-size:10.5px;font-weight:normal;color:#111;transform:scaleX(1.0193);transform-origin:left 0;font-family:'Liberation Sans', sans-serif;-webkit-text-stroke:0;">100</div>
<div style="left:49px;top:718.5px;width:1px;height:13.5px;background:#c8c8c8;"></div>
<div style="left:62px;top:718.5px;width:1px;height:13.5px;background:#c8c8c8;"></div>
<div style="left:75px;top:718.5px;width:1px;height:13.5px;background:#c8c8c8;"></div>
<div style="left:94.2px;top:718.5px;width:1.0px;height:13.5px;background:#c8c8c8;"></div>
<svg style="left:50px;top:719px;" width="45" height="13" viewBox="0 0 45 13"><path d="M0.8 10.8 L3 8.6 L4.6 9.1 L8.4 5.6 L11.2 8.6 V10.8 Z" fill="#000"/><path d="M14 10.8 V6.6 L16.4 5 L18 6.9 L24.1 1.1 V10.8 Z" fill="#000"/><defs><linearGradient id="wg" x1="0" x2="1"><stop offset="0" stop-color="#aaa"/><stop offset="1" stop-color="#fff"/></linearGradient></defs><rect x="28" y="1" width="14" height="9.8" fill="#000"/><rect x="29" y="2" width="12" height="1" fill="#fff"/><rect x="32.5" y="4" width="8.5" height="5.8" fill="url(#wg)"/><path d="M29.5 4.5 h1 M30.5 5.5 h1 M29.5 6.5 h1 M30.5 7.5 h1 M29.5 8.5 h1 M30.5 9.3 h1" stroke="#ddd" stroke-width="0.9"/></svg>
<div id="t98" class="t" style="left:105.52px;top:719.00px;font-size:11px;font-weight:normal;color:#111;transform:scaleX(1.0048);transform-origin:left 0;font-family:'Liberation Sans', sans-serif;">Blättern</div>
</body></html>
